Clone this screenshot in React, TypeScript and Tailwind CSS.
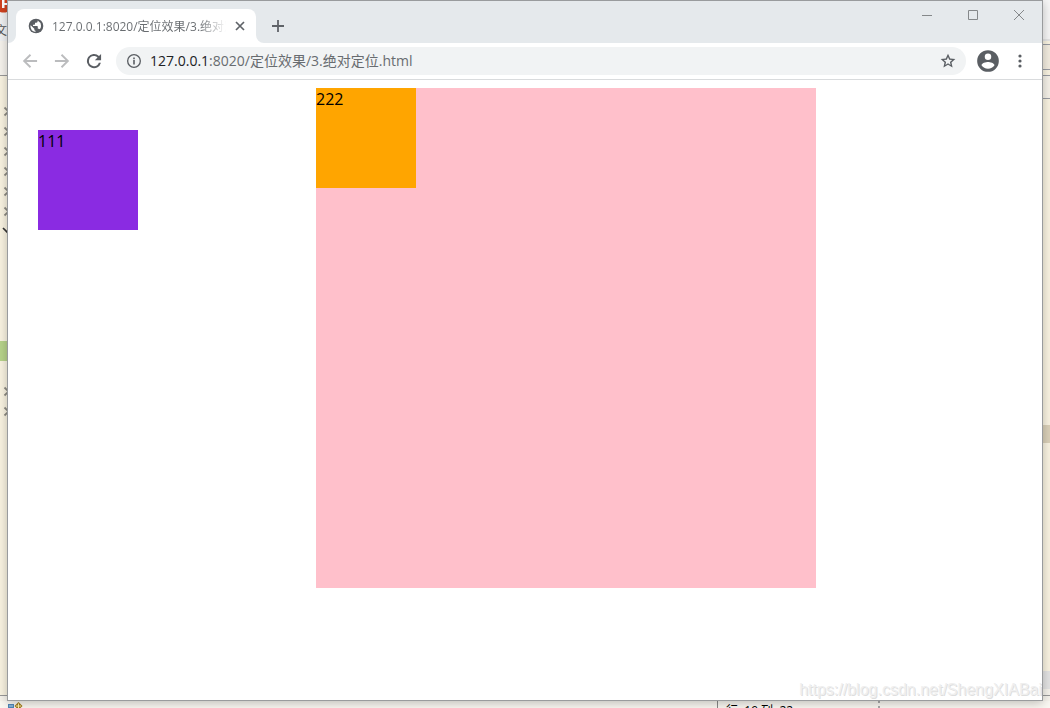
import type { ReactNode } from "react";

const CHEVRON_ROWS = [0, 1, 2, 3, 4, 5];

function Icon({ className, children }: { className: string; children: ReactNode }) {
  return (
    <svg viewBox="0 0 24 24" fill="currentColor" aria-hidden="true" className={className}>
      {children}
    </svg>
  );
}

function TreeArrow() {
  return (
    <svg viewBox="0 0 7 20" fill="none" stroke="#8d8b83" strokeWidth="1.8" aria-hidden="true" className="block h-5 w-[7px] shrink-0">
      <path d="M4.5 6.5 8.5 10.5 4.5 14.5" />
    </svg>
  );
}

function EditorLeft() {
  return (
    <div className="flex w-[7px] shrink-0 flex-col overflow-hidden bg-[#faf4e2]">
      <div className="h-[13px] shrink-0 overflow-hidden bg-[#f1f2f3]">
        <svg viewBox="0 0 7 13" aria-hidden="true" className="h-[13px] w-[7px]">
          <path d="M0 0H7V12Q4 13 0 12Z" fill="#d0421f" />
          <path d="M2 0H4.5V3H7V5H4.5V8H2Z" fill="#fff" />
        </svg>
      </div>
      <div className="flex h-[28px] shrink-0 items-center justify-end overflow-hidden bg-[#f1f2f3] text-[12px] leading-4 text-[#555]">
        <span className="pt-2">文</span>
      </div>
      <div className="h-[35px] shrink-0 border-b border-[#999] bg-[#f7f4ee]" />
      <div className="h-[25px] shrink-0" />
      {CHEVRON_ROWS.map((row) => (
        <TreeArrow key={row} />
      ))}
      <svg viewBox="0 0 7 20" fill="none" stroke="#333" strokeWidth="1.6" aria-hidden="true" className="block h-5 w-[7px] shrink-0">
        <path d="M3 7 7 11 11 7" />
      </svg>
      <div className="mt-[100px] h-5 shrink-0 bg-[#b8d48b]" />
      <div className="h-5 shrink-0" />
      <TreeArrow />
      <TreeArrow />
      <div className="min-h-0 flex-1" />
      <div className="h-[6px] shrink-0 border-t border-[#999] bg-[#f6f3ec]" />
    </div>
  );
}

function EditorRight() {
  return (
    <div className="flex w-[7px] shrink-0 flex-col bg-[#faf4e2]">
      <div className="h-[41px] shrink-0 border-b-2 border-[#e6e6e6] bg-[#f7f7f7]" />
      <div className="mt-[3px] h-[26px] shrink-0 border-y border-[#999ca3] bg-[#f3ede0]" />
      <div className="mt-[5px] h-6 shrink-0 border-y border-[#999ca3] bg-[#f6f2e9]" />
      <div className="mt-[326px] h-[18px] shrink-0 bg-[#dbd1b9]" />
      <div className="min-h-0 flex-1" />
      <div className="h-[18px] shrink-0 bg-[#e4e4e4]" />
      <div className="h-[7px] shrink-0 border-b border-[#999] bg-[#f6f3ec]" />
      <div className="h-[5px] shrink-0 bg-[#f6f3ec]" />
    </div>
  );
}

function EditorStatus() {
  return (
    <div className="flex h-[7px] shrink-0 overflow-hidden bg-[#faf8f2] pl-2">
      <svg viewBox="0 0 15 7" aria-hidden="true" className="h-[7px] w-[15px] shrink-0">
        <path d="M0 3H6V7H0Z" fill="#4f86b8" />
        <path d="M1 4.5H5V5.5H1Z" fill="#b9dcf4" />
        <path d="M10.5 1 12.5 3 14.5 5 12.5 7H8.5L6.5 5 8.5 3Z" fill="#a17a18" />
        <path d="M10 2.5H11V4.5H13V5.5H11V7H10V5.5H8V4.5H10Z" fill="#fff4b0" />
      </svg>
      <div className="flex-1" />
      <div className="flex w-[333px] border-l border-[#888] text-[12px] leading-4 text-black">
        <span className="w-40 pt-[2px] pl-2">行: 19 列: 22</span>
        <span className="border-l-2 border-dotted border-[#aaa]" />
      </div>
    </div>
  );
}

function TabStrip() {
  return (
    <header className="flex h-[42px] shrink-0 items-end bg-[#e5e9ec]">
      <svg viewBox="0 0 8 8" aria-hidden="true" className="h-2 w-2 shrink-0">
        <path d="M8 0V8H0A8 8 0 0 0 8 0Z" fill="#fff" />
      </svg>
      <div className="flex h-[34px] w-60 items-center rounded-t-lg bg-white pr-2 pl-3">
        <Icon className="h-4 w-4 shrink-0 text-[#5a5e63]">
          <circle cx="12" cy="12" r="11" />
          <path
            d="M4 10.8 9.5 16V17.2Q9.5 19 11.2 19V21Q4 20 3.6 12ZM14.5 3.7V5Q14.5 7 12.5 7H10.5V9Q10.5 10 9.5 10H7.5V12H13.5Q14.7 12 14.7 13.2V16H16Q17.4 16 17.7 17 19.6 14.7 19.6 11.5 19 6 14.5 3.7Z"
            fill="#fff"
          />
        </Icon>
        <span className="ml-2 w-[174px] overflow-hidden bg-linear-to-r from-[#686c70] from-85% to-transparent bg-clip-text pt-[2px] text-[12px] leading-4 whitespace-nowrap text-transparent">
          127.0.0.1:8020/定位效果/3.绝对定位.html
        </span>
        <button type="button" aria-label="Close tab" className="ml-auto flex h-4 w-4 items-center justify-center text-[#5f6368]">
          <svg viewBox="0 0 10 10" fill="none" stroke="currentColor" strokeWidth="1.7" className="h-[10px] w-[10px]">
            <path d="M1 1 9 9M9 1 1 9" />
          </svg>
        </button>
      </div>
      <svg viewBox="0 0 8 8" aria-hidden="true" className="h-2 w-2 shrink-0">
        <path d="M0 0V8H8A8 8 0 0 1 0 0Z" fill="#fff" />
      </svg>
      <button type="button" aria-label="New tab" className="flex h-[34px] w-7 items-center justify-center text-[#5f6368]">
        <svg viewBox="0 0 12 12" fill="none" stroke="currentColor" strokeWidth="1.8" className="h-3 w-3">
          <path d="M6 0V12M0 6H12" />
        </svg>
      </button>
      <div className="ml-auto flex h-7 self-start text-[#85888a]">
        <button type="button" aria-label="Minimize" className="flex w-[46px] items-center justify-center">
          <svg viewBox="0 0 10 10" fill="none" stroke="currentColor" className="h-[10px] w-[10px]">
            <path d="M0 5.5H10" />
          </svg>
        </button>
        <button type="button" aria-label="Maximize" className="flex w-[46px] items-center justify-center">
          <svg viewBox="0 0 10 10" fill="none" stroke="currentColor" className="h-[10px] w-[10px]">
            <path d="M.5 .5H9.5V9.5H.5Z" />
          </svg>
        </button>
        <button type="button" aria-label="Close" className="flex w-[46px] items-center justify-center">
          <svg viewBox="0 0 10 10" fill="none" stroke="currentColor" className="h-[10px] w-[10px]">
            <path d="M0 0 10 10M10 0 0 10" />
          </svg>
        </button>
      </div>
    </header>
  );
}

function Toolbar() {
  return (
    <nav className="flex h-[37px] shrink-0 items-center border-b border-[#d9dbdd] bg-white pr-3 pl-3 text-[#5a5e63]">
      <button type="button" aria-label="Back" className="flex w-5 justify-center text-[#bbbcbe]">
        <Icon className="h-5 w-5 shrink-0">
          <path d="M20.5 10.8H7.8l5.6-5.4L11.8 3.6l-8.4 8.4 8.4 8.4 1.6-1.8L7.8 13.2h12.7z" />
        </Icon>
      </button>
      <button type="button" aria-label="Forward" className="ml-3 flex w-5 justify-center text-[#bbbcbe]">
        <Icon className="h-5 w-5 shrink-0">
          <path d="M3.5 10.8h12.7l-5.6-5.4 1.6-1.8 8.4 8.4-8.4 8.4-1.6-1.8 5.6-5.4H3.5z" />
        </Icon>
      </button>
      <button type="button" aria-label="Reload" className="ml-3 flex w-5 justify-center">
        <Icon className="h-5 w-5 shrink-0">
          <path d="M18 6A8.5 8.5 0 1 0 20.3 14h-2.5A6.1 6.1 0 1 1 12 5.900c1.660 0 3.140.69 4.220 1.780L13 11h7.500V3.500z" />
        </Icon>
      </button>
      <div className="ml-3 flex h-7 min-w-0 flex-1 items-center rounded-full bg-[#f1f3f4] pr-[10px] pl-[10px]">
        <button type="button" aria-label="View site information">
          <Icon className="block h-4 w-4">
            <path d="M12 1.500a10.500 10.500 0 1 0 0 21 10.500 10.500 0 0 0 0-21zm0 19a8.500 8.500 0 1 1 0-17 8.500 8.500 0 0 1 0 17zM10.800 17.300h2.400v-7h-2.400zM10.800 9h2.400V6.600h-2.400z" />
          </Icon>
        </button>
        <a href="#page" className="ml-2 text-[14px] leading-5 text-[#686c70]">
          <span className="text-[#202124]">127.0.0.1</span>:8020/定位效果/3.绝对定位.html
        </a>
        <button type="button" aria-label="Bookmark this page" className="ml-auto">
          <Icon className="block h-4 w-4">
            <path d="M23 9.1l-7.7-.7L12 1.2 8.7 8.4 1 9.1l5.8 5.1-1.7 7.6 6.9-4 6.9 4-1.7-7.6L23 9.1zm-11 6.4-3.9 2.4 1-4.5-3.4-3 4.5-.4L12 5.9l1.8 4.1 4.5.4-3.4 3 1 4.5L12 15.5z" />
          </Icon>
        </button>
      </div>
      <button type="button" aria-label="Profile" className="ml-[9px]">
        <Icon className="block h-[26px] w-[26px]">
          <path d="M12 2a10 10 0 1 0 0 20 10 10 0 0 0 0-20zm0 3a3 3 0 1 1 0 6 3 3 0 0 1 0-6zm0 14.2a7.2 7.2 0 0 1-6-3.2c.03-2 4-3.1 6-3.1s5.97 1.1 6 3.1a7.2 7.2 0 0 1-6 3.2z" />
        </Icon>
      </button>
      <button type="button" aria-label="Menu" className="ml-[9px] flex w-5 justify-center">
        <svg viewBox="0 0 4 14" fill="currentColor" className="h-[14px] w-1">
          <circle cx="2" cy="2" r="1.6" />
          <circle cx="2" cy="7" r="1.6" />
          <circle cx="2" cy="12" r="1.6" />
        </svg>
      </button>
    </nav>
  );
}

function PageContent() {
  return (
    <main id="page" className="flex min-h-0 flex-1 flex-col justify-between bg-white text-[16px] leading-[22px] text-black">
      <div className="flex items-start pt-2 pl-[30px]">
        <div className="mt-[42px] h-[100px] w-[100px] bg-[#8a2be2]">111</div>
        <div className="ml-[178px] h-[500px] w-[500px] bg-[#ffc0cb]">
          <div className="h-[100px] w-[100px] bg-[#ffa500]">222</div>
        </div>
      </div>
      <p className="overflow-hidden text-right font-['Liberation_Sans',sans-serif] leading-5 whitespace-nowrap text-[#efefef] [text-shadow:1px_1px_0_#dedede]">
        https://blog.csdn.net/ShengXIABai
      </p>
    </main>
  );
}

export default function App() {
  return (
    <div className="flex h-screen flex-col overflow-hidden bg-[#f6f3ec] font-['Open_Sans','Noto_Sans_CJK_SC',sans-serif]">
      <div className="flex min-h-0 flex-1">
        <EditorLeft />
        <div className="z-10 flex min-w-0 flex-1 flex-col border border-[#999b9d] shadow-[0_2px_10px_rgba(0,0,0,0.25)]">
          <TabStrip />
          <Toolbar />
          <PageContent />
        </div>
        <EditorRight />
      </div>
      <EditorStatus />
    </div>
  );
}
